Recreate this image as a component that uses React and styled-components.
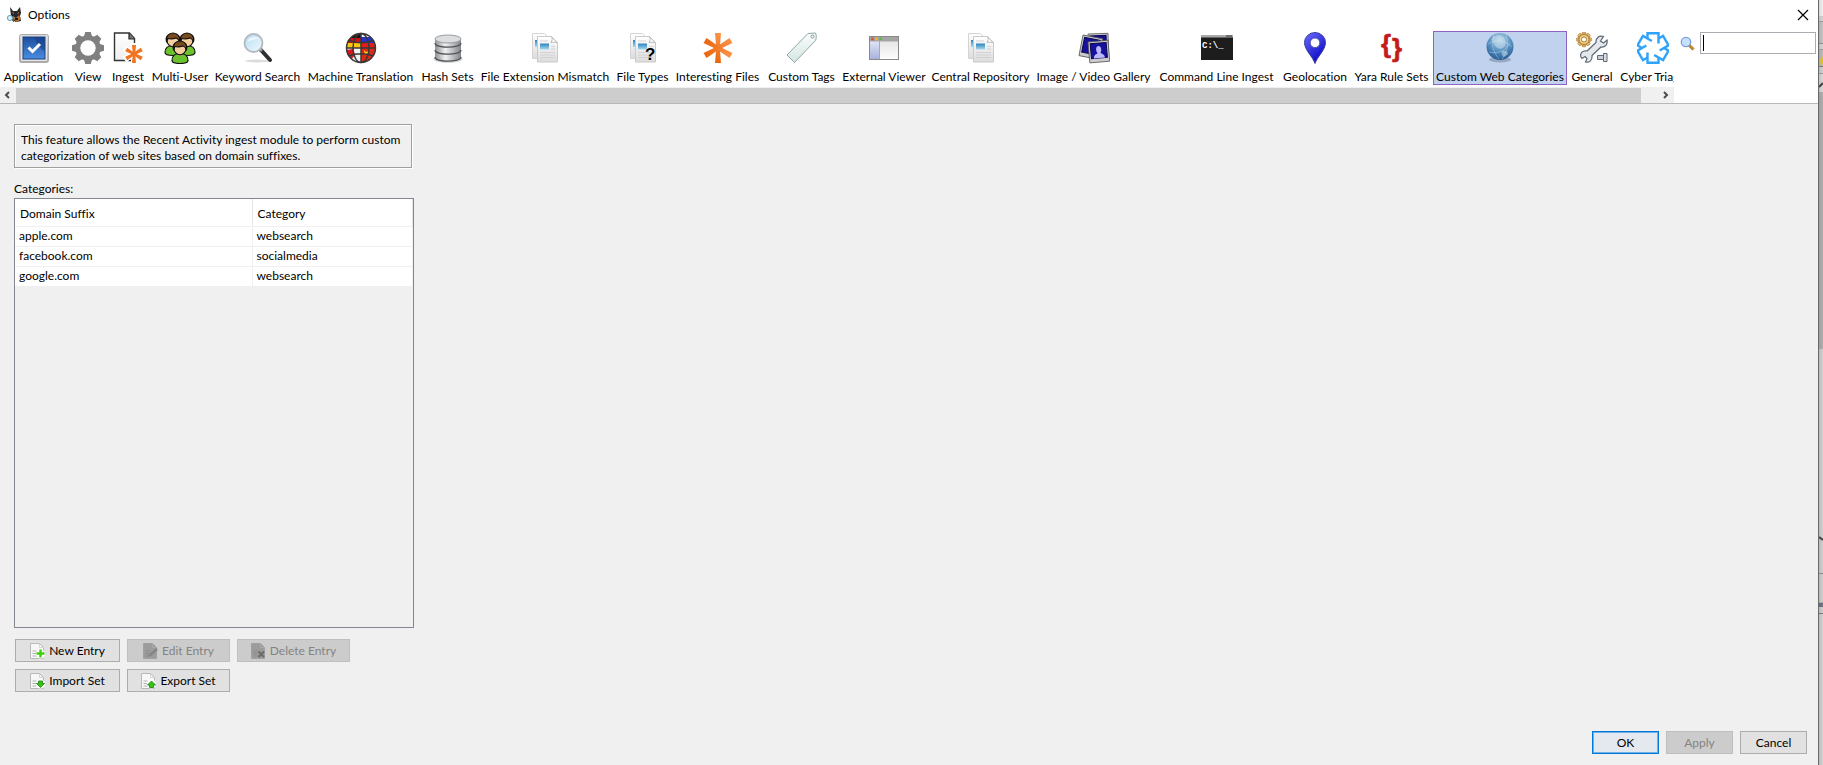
import React from 'react';
import styled, { createGlobalStyle, css } from 'styled-components';

const Global = createGlobalStyle`
  * { box-sizing: border-box; }
  body { margin: 0; }
  body, button, input, table {
    font: 12px/16px Lato, "Open Sans", sans-serif;
    font-variant-ligatures: none;
    color: #000;
  }
`;

const Desktop = styled.div`
  display: flex;
  min-height: 100vh;
  background: #cfcfcf;
`;

const Dialog = styled.main`
  flex: 1;
  min-width: 0;
  display: flex;
  flex-direction: column;
  background: #f0f0f0;
  border-right: 1px solid #6a6a6a;
`;

const TitleBar = styled.header`
  height: 31px;
  padding: 0 9px 2px 7px;
  display: flex;
  align-items: center;
  gap: 5px;
  background: #fff;
`;

const Title = styled.h1`
  flex: 1;
  margin: 0;
  font-size: 12px;
  font-weight: 400;
`;

const IconButton = styled.button`
  display: flex;
  align-items: center;
  justify-content: center;
  width: 12px;
  height: 15px;
  padding: 0;
  border: 0;
  background: transparent;
`;

const Toolbar = styled.div`
  display: flex;
  background: #fff;
  border-bottom: 1px solid #b8b8b8;
  height: 73px;
`;

const Scroller = styled.div`
  flex: 1;
  min-width: 0;
  display: flex;
  flex-direction: column;
  justify-content: space-between;
`;

const ToolList = styled.nav`
  display: flex;
  gap: 2px;
  overflow: hidden;
`;

const Tool = styled.button`
  flex: none;
  width: ${p => p.$width}px;
  height: 54px;
  padding: 0;
  display: flex;
  flex-direction: column;
  align-items: center;
  white-space: nowrap;
  border: 1px solid ${p => (p.$active ? '#8e63c4' : 'transparent')};
  background: ${p => (p.$active ? '#c1d2ee' : 'transparent')};
`;

const ToolLabel = styled.span`
  line-height: 16px;
  height: 20px;
  padding-top: 5px;
`;

const ScrollBar = styled.div`
  display: flex;
  align-items: center;
  height: 16px;
  padding: 0 2px 0 1px;
  background: #f0f0f0;
`;

const Thumb = styled.div`
  flex: 1;
  height: 15px;
  margin: 0 19px 0 3px;
  background: #cdcdcd;
`;

const SearchArea = styled.label`
  flex: none;
  width: 144px;
  display: flex;
  align-items: flex-start;
  gap: 5px;
  padding: 1px 2px 0 6px;

  svg { margin-top: 4px; }
`;

const SearchField = styled.span`
  flex: 1;
  min-width: 0;
  display: flex;
  align-items: center;
  height: 22px;
  padding: 0 2px;
  border: 1px solid #abadb3;
  background: #fff;
`;

const Caret = styled.span`
  width: 1px;
  height: 16px;
  background: #000;
`;

const SearchInput = styled.input`
  flex: 1;
  min-width: 0;
  padding: 0;
  border: 0;
  outline: 0;
  background: transparent;
`;

const Panel = styled.section`
  flex: 1;
  width: 414px;
  padding: 20px 0 0 14px;
  display: flex;
  flex-direction: column;
`;

const Description = styled.p`
  margin: 0 2px 0 0;
  height: 44px;
  padding: 7px 6px 0;
  border: 1px solid #a0a0a0;
  box-shadow: inset 1px 1px 0 #fff, 1px 1px 0 #fff;
  white-space: nowrap;
`;

const TableLabel = styled.h2`
  margin: 13px 0 1px;
  font-size: 12px;
  font-weight: 400;
`;

const TableBox = styled.div`
  flex: 1;
  border: 1px solid #828790;
`;

const Table = styled.table`
  width: 100%;
  table-layout: fixed;
  border-collapse: collapse;
  background: #fff;

  th, td {
    padding: 0 4px;
    text-align: left;
    font-weight: 400;
    border-right: 1px solid #f0f0f0;
    border-bottom: 1px solid #f0f0f0;
  }
  th { height: 27px; padding: 3px 5px 0; border-right: 1px solid #e5e5e5; }
  td { height: 20px; }
  th:first-child { width: 237px; }
`;

const Actions = styled.div`
  display: grid;
  grid-template-columns: 105px 103px 113px;
  gap: 7px;
  padding: 11px 0 0 1px;
`;

const Footer = styled.footer`
  display: flex;
  justify-content: flex-end;
  gap: 7px;
  padding: 39px 11px 11px;
`;

const disabledLook = css`
  color: #838383;
  background: #ccc;
  border-color: #bfbfbf;
`;

const defaultLook = css`
  background: #e4e9f0;
  border-color: #0078d7;
  box-shadow: inset 0 0 0 1px #6fb1e6;
`;

const PushButton = styled.button`
  height: 23px;
  min-width: 67px;
  padding: 1px 0 0;
  display: flex;
  align-items: center;
  justify-content: center;
  gap: 3px;
  border: 1px solid #adadad;
  background: #e1e1e1;
  ${p => p.$primary && defaultLook}
  ${p => p.disabled && disabledLook}
`;

const Backdrop = styled.div`
  width: 4px;
  display: flex;
  flex-direction: column;
`;

const Slice = styled.div`
  height: ${p => p.$height}px;
  flex: ${p => (p.$height ? 'none' : 1)};
  overflow: hidden;
  background: linear-gradient(90deg, rgba(0, 0, 0, .1), transparent) ${p => p.$color};
  border-bottom: 1px solid ${p => p.$line || 'transparent'};
`;

/* ---------- drawings ---------- */

const Svg = ({ size = 32, children }) => (
  <svg width={size} height={size} viewBox={`0 0 ${size} ${size}`} fill="none" aria-hidden="true">
    {children}
  </svg>
);

const Grad = ({ id, from, to, x2 = 0, y2 = 1 }) => (
  <linearGradient id={id} x1="0" y1="0" x2={x2} y2={y2}>
    <stop stopColor={from} /><stop offset="1" stopColor={to} />
  </linearGradient>
);

const ApplicationIcon = () => (
  <Svg>
    <defs><Grad id="apFrame" from="#dcdcdc" to="#a9a9a9" /><Grad id="apBlue" from="#1d4d9e" to="#4a8ee0" /></defs>
    <rect x="1.500" y="2.500" width="29" height="28" rx="2" fill="url(#apFrame)" stroke="#aaa" />
    <rect x="3" y="4" width="26" height="25" rx="1" fill="#e4e4e4" />
    <rect x="5" y="5" width="22" height="22" fill="url(#apBlue)" stroke="#1b3f7d" />
    <path d="M17 5.500h9.500V19c-4-2-8-6-9.500-13.500z" fill="#173f83" opacity=".6" />
    <path d="M10.500 15.500l4 4 7.500-7.500" stroke="#fff" strokeWidth="3" />
  </Svg>
);

const teeth = [0, 45, 90, 135, 180, 225, 270, 315];

const ViewIcon = () => (
  <Svg>
    <circle cx="16" cy="16" r="10.200" stroke="#808080" strokeWidth="5" />
    {teeth.map(a => <path key={a} d="M11.800 5L13.200 0h5.600l1.400 5z" fill="#808080" transform={`rotate(${a} 16 16)`} />)}
  </Svg>
);

const Asterisk = ({ x, y, r, w, fill }) => (
  <g transform={`translate(${x} ${y})`} fill={fill}>
    {[0, 60, 120].map(a => (
      <path key={a} transform={`rotate(${a})`} d={`M${-w} ${-r}h${2 * w}L${w * 0.6} 0L${w} ${r}h${-2 * w}L${-w * 0.6} 0z`} />
    ))}
  </g>
);

const IngestIcon = () => (
  <Svg>
    <defs><Grad id="inPage" from="#fff" to="#eee" /></defs>
    <path d="M2.500 1h15l5 5.500V28.500h-20z" fill="url(#inPage)" stroke="#333" strokeWidth="1.400" />
    <path d="M17 1v6h5.500" fill="#777" stroke="#222" strokeWidth="1.200" />
    <Asterisk x={22} y={22} r={11} w={3.5} fill="#fff" />
    <Asterisk x={22} y={22} r={9} w={2} fill="#f07522" />
  </Svg>
);

const Person = ({ x, y }) => (
  <g transform={`translate(${x} ${y})`} stroke="#111" strokeWidth="1.200">
    <path d="M-8 12c0-5 3-7 8-7s8 2 8 7c0 2-3 3-8 3s-8-1-8-3z" fill="#6cc22c" />
    <path d="M-3 5c1 3 5 3 6 0l-1-2h-4z" fill="#eec08d" stroke="none" />
    <ellipse cy="0" rx="6" ry="6.300" fill="#f5cfa0" />
    <path d="M-6.500 1C-8-4-4-7.500 0-7.500S8-4 6.500 1C5.500-1 5-2 3-2.500 0-1.500-3-1.500-5-2c-1 1-1 2-1.500 3z" fill="#7a4a1f" />
  </g>
);

const MultiUserIcon = () => (
  <Svg><Person x={9} y={8.5} /><Person x={23} y={8.5} /><Person x={16} y={16.5} /></Svg>
);

const KeywordIcon = () => (
  <Svg>
    <defs><Grad id="kwLens" from="#b4dcf2" to="#f2fbff" x2={1} /></defs>
    <ellipse cx="15" cy="29" rx="12" ry="1.500" fill="#ddd" />
    <path d="M19 18l9 10" stroke="#2e3033" strokeWidth="4" strokeLinecap="round" />
    <path d="M17 16l3 3" stroke="#999" strokeWidth="2.500" />
    <circle cx="11.500" cy="11" r="9" fill="url(#kwLens)" stroke="#b4b9bd" strokeWidth="1.800" />
    <path d="M5 10c2-5 8-6 12-3-5 0-8 1-12 3z" fill="#fff" opacity=".7" />
  </Svg>
);

const TranslationIcon = () => (
  <Svg>
    <clipPath id="mtClip"><circle cx="16" cy="16" r="14.500" /></clipPath>
    <g clipPath="url(#mtClip)">
      <path d="M0 0h16v6H0z" fill="#151515" /><path d="M0 6h16v5H0z" fill="#d40f14" />
      <path d="M0 11h16v5H0z" fill="#f8c70d" />
      <path d="M16 0h16v7H16z" fill="#f3f3f3" /><path d="M16 5h16v6H16z" fill="#2732c9" />
      <path d="M16 11h16v5H16z" fill="#e31b1b" />
      <path d="M0 16h32v16H0z" fill="#f2f2f2" /><path d="M0 18l8-1 2 6-5 6H0z" fill="#d81820" />
      <path d="M16 16h16v16H16z" fill="#dd2a16" /><path d="M19 18l2 2 3-1-1 3-3 1z" fill="#ffd91c" />
    </g>
    <g stroke="#383838" strokeWidth="1.500">
      <circle cx="16" cy="16" r="14.500" /><ellipse cx="16" cy="16" rx="8" ry="14.500" />
      <path d="M16 1.500v29M1.500 16h29M4 8.500c7 3 17 3 24 0M4 24c7-3 17-3 24 0" />
    </g>
  </Svg>
);

const HashIcon = () => (
  <Svg>
    <defs>
      <linearGradient id="hsBody"><stop stopColor="#8d8f92" /><stop offset=".4" stopColor="#f1f1f1" /><stop offset="1" stopColor="#808388" /></linearGradient>
    </defs>
    <ellipse cx="16" cy="27" rx="14.500" ry="4" fill="#d7d7d7" />
    {[20, 13, 6].map(y => (
      <g key={y}>
        <path d={`M3 ${y}v5c0 5.500 26 5.500 26 0v-5z`} fill="url(#hsBody)" />
        <path d={`M3 ${y + 5}c0 5.500 26 5.500 26 0`} stroke="#4d5358" strokeWidth="1.300" />
      </g>
    ))}
    <ellipse cx="16" cy="7" rx="13" ry="4" fill="#dcdddf" stroke="#999ca0" />
  </Svg>
);

const FilesIcon = ({ query }) => (
  <Svg>
    <defs><Grad id="flPage" from="#fff" to="#dcdcdc" /><Grad id="flPhoto" from="#2f82bd" to="#a7d9ee" /></defs>
    <path d="M3.500 1.500h12l4 4v21h-16z" fill="url(#flPage)" stroke="#d4d4d4" />
    <path d="M6 8h5v7H6z" fill="url(#flPhoto)" />
    <path d="M8.500 4.500h14l6 6.500v19h-20z" fill="url(#flPage)" stroke="#cacaca" />
    <path d="M22.500 4.500c1.500 2 .5 4-.5 6 2.500-.5 5-.5 6.500.5z" fill="#fff" stroke="#bbb" />
    <path d="M11 11.500h9v6h-9z" fill="url(#flPhoto)" />
    <path d="M11 9h8M22 14.500h4M22 17h4M11 20.500h15M11 23h15M11 25.500h15" stroke="#d2d2d2" />
    {query && <text x="18" y="28" fill="#000" fontFamily="Liberation Sans" fontSize="17" fontWeight="700">?</text>}
  </Svg>
);

const InterestingIcon = () => (
  <Svg>
    <defs><linearGradient id="itOrange" gradientUnits="userSpaceOnUse" x1="0" y1="-15" x2="0" y2="15"><stop stopColor="#fb9245" /><stop offset="1" stopColor="#e9660f" /></linearGradient></defs>
    <Asterisk x={16} y={16} r={15} w={3} fill="url(#itOrange)" />
  </Svg>
);

const TagIcon = () => (
  <Svg>
    <defs><Grad id="tgBody" from="#fafdfc" to="#d3e6e3" /></defs>
    <path d="M22 1.500L29.500 1c1 2.500 1 5 0 7.500L8.500 30.500 1 23z" fill="url(#tgBody)" stroke="#8fa6a2" />
    <circle cx="26.500" cy="4.500" r="1.500" fill="#fff" stroke="#7f9591" />
  </Svg>
);

const ViewerIcon = () => (
  <Svg>
    <defs><Grad id="vwSide" from="#dfe4f6" to="#a9b2dc" /><Grad id="vwMain" from="#e6e6e6" to="#fdfdfd" /></defs>
    <rect x="1.500" y="4.500" width="29" height="23" fill="#aaa" stroke="#898989" />
    <path d="M2 5h28v4H2z" fill="#a5a5a5" />
    <path d="M2 9.500h9V27H2z" fill="url(#vwSide)" /><path d="M12 9.500h18V27H12z" fill="url(#vwMain)" />
    <circle cx="4.500" cy="7" r="1.400" fill="#e24a4a" /><circle cx="8.500" cy="7" r="1.400" fill="#e8ba2c" /><circle cx="12.500" cy="7" r="1.400" fill="#5db63d" />
  </Svg>
);

const Photo = ({ turn, x, y, person }) => (
  <g transform={`translate(${x} ${y}) rotate(${turn})`}>
    <rect width="20" height="21" fill="#ccc" stroke="#555" strokeWidth=".8" />
    <rect x="2" y="2" width="16" height="15" fill="#17109a" stroke="#0b0750" />
    {person && <path d="M4.500 17c0-4 3-4 4-5-2-3-1-7 1.500-7s3.500 4 1.500 7c1 1 4 1 4 5z" fill="#b9b7ff" />}
  </g>
);

const GalleryIcon = () => (
  <Svg><Photo x={10} y={2} turn={-2} /><Photo x={5} y={3} turn={11} /><Photo x={10} y={10} turn={-5} person /></Svg>
);

const CommandIcon = () => (
  <Svg>
    <rect y="3" width="32" height="25" fill="#1d1d1d" />
    <path d="M0 3h32v2.500H0z" fill="#a9a9a9" /><path d="M25 4h6" stroke="#333" />
    <text x="1" y="16" fill="#fff" fontFamily="Liberation Mono" fontSize="9" fontWeight="700">C:\_</text>
  </Svg>
);

const PinIcon = () => (
  <Svg>
    <defs><Grad id="pnBlue" from="#6d6dff" to="#0808c4" x2={0.6} /></defs>
    <path d="M16 31.500C14 25 5.500 18 5.500 10.500a10.500 10 0 0 1 21 0C26.500 18 18 25 16 31.500z" fill="url(#pnBlue)" stroke="#3c3ca0" />
    <circle cx="16" cy="10.800" r="4.800" fill="#fff" stroke="#5a5aa8" />
  </Svg>
);

const YaraIcon = () => (
  <Svg>
    <g fill="#c41a1a" fontFamily="Liberation Sans" fontSize="26" fontWeight="700" stroke="#c41a1a" strokeWidth=".6">
      <text x="5" y="21">{'{'}</text><text x="16" y="25">{'}'}</text>
    </g>
  </Svg>
);

const GlobeIcon = () => (
  <Svg>
    <defs><radialGradient id="gbBlue" cx=".5" cy=".25" r=".8"><stop stopColor="#b8d6ea" /><stop offset=".5" stopColor="#5b93c2" /><stop offset="1" stopColor="#1d5490" /></radialGradient></defs>
    <ellipse cx="16" cy="27.500" rx="11" ry="3" fill="#7d8aa3" opacity=".6" />
    <circle cx="16" cy="14.500" r="13.500" fill="url(#gbBlue)" />
    <path d="M9 5c4-3 9-2 11 1s3 8-1 10-8-1-9-4-4-4-1-7zM18 19c3-1 6 0 6 3l-4 3c-2-1-3-4-2-6z" fill="#cfe2ee" opacity=".5" />
    <path d="M4 12c7-5 17-4 24 3M5 20c8 2 16 0 21-9M10 3c-3 9-1 17 5 24M22 3c3 8 1 17-4 24" stroke="#d9ecf7" strokeWidth=".6" opacity=".6" />
  </Svg>
);

const GeneralIcon = () => (
  <Svg>
    {teeth.map(a => <path key={a} d="M6 2.200l.6-2h2.800l.6 2z" fill="#e9bd6c" stroke="#a87a28" strokeWidth=".7" transform={`rotate(${a} 8 7.500)`} />)}
    <circle cx="8" cy="7.500" r="5" fill="#f5d493" stroke="#a87a28" />
    <circle cx="8" cy="7.500" r="2.600" fill="#fff" stroke="#a87a28" />
    <path d="M27.500 4.500c-4-1.500-8 1.500-7.500 6L11 19c-4-1-7.500 2-6 6l1 1.500 3-2 2 2-1.500 3.500c4 1 7-2 6.500-6.500l9-8.500c4 .5 7-2.500 6-7l-3.500 3-3-2z" fill="#e4e8ec" stroke="#5c6875" strokeWidth="1.200" />
    <path d="M21.500 23.500h6v4h-6z" fill="#c9ced4" stroke="#5c6875" /><path d="M27.500 21.500h3.500v8h-3.500z" fill="#d9dde2" stroke="#5c6875" />
  </Svg>
);

const CyberIcon = () => (
  <Svg>
    <g transform="translate(16 16)" stroke="#2fa3fb" strokeWidth="2.400">
      {[0, 60, 120, 180, 240, 300].map(a => <path key={a} d="M-5.500-9.500V-14.800H5.500V-4.500" transform={`rotate(${a})`} />)}
    </g>
  </Svg>
);

const DogIcon = () => (
  <Svg size={16}>
    <path d="M3 0l3 4h4l3-4 1 6-1 3 1 5-5 1-6-3 1-3z" fill="#27272b" />
    <path d="M6 9l3 2 3-3 2 4-4 3-4-3z" fill="#b5712b" /><path d="M5.500 5.500l1.500 1M12 5.500l-1.500 1" stroke="#d08a3e" />
    <path d="M8 11h3v2H8z" fill="#1b1b1d" />
    <circle cx="3" cy="11" r="2.600" fill="#d4eef7" stroke="#5aa7bd" /><path d="M5 13l2 2" stroke="#666" />
  </Svg>
);

const LookupIcon = () => (
  <Svg size={15}>
    <path d="M9 9l4.500 4.500" stroke="#b5731a" strokeWidth="3" /><path d="M10 9.500l3.500 3.500" stroke="#e9a83f" />
    <circle cx="6" cy="6" r="4.700" fill="#c4e2fb" stroke="#7d9dda" strokeWidth="1.300" />
  </Svg>
);

const CloseIcon = () => <Svg size={12}><path d="M1 1l10 10M11 1L1 11" stroke="#000" strokeWidth="1.200" /></Svg>;

const Chevron = ({ right }) => (
  <svg width="8" height="8" viewBox="0 0 8 8" fill="none" aria-hidden="true">
    <path d={right ? 'M2 1l3 3-3 3' : 'M6 1L3 4l3 3'} stroke="#4d4d4d" strokeWidth="2" />
  </svg>
);

const marks = {
  add: <path d="M10.500 6.500v8M6.500 10.500h8" stroke="#3fce0c" strokeWidth="2.400" />,
  edit: <path d="M6 13l8-7" stroke="#858585" strokeWidth="2.500" />,
  remove: <path d="M7.500 8.500l5.500 5.500M13 8.500L7.500 14" stroke="#6c6c6c" strokeWidth="2.200" />,
  down: <path d="M8.500 8h4v2.500h2l-4 4-4-4h2z" fill="#36c414" stroke="#198208" strokeWidth=".8" />,
  up: <path d="M8.500 14.500h4V12h2l-4-4-4 4h2z" fill="#36c414" stroke="#198208" strokeWidth=".8" />,
};

const EntryIcon = ({ mark, dim }) => (
  <Svg size={16}>
    <path d="M.5.500h9l4 4v11H.5z" fill={dim ? '#9c9c9c' : '#f7f7f7'} stroke={dim ? '#a0a0a0' : '#b9b9b9'} />
    <path d="M9.500.500v4h4" stroke={dim ? '#ababab' : '#d5d5d5'} />
    <path d="M2.500 8h4M2.500 10.500h3.500M2.500 13h4" stroke={dim ? '#8b8b8b' : '#aeb2b5'} />
    {!dim && <circle cx="10.500" cy="11" r="4.500" fill="#fff" />}
    {marks[mark]}
  </Svg>
);

/* ---------- data ---------- */

const tools = [
  { label: 'Application', width: 67, icon: <ApplicationIcon /> },
  { label: 'View', width: 38, icon: <ViewIcon /> },
  { label: 'Ingest', width: 38, icon: <IngestIcon /> },
  { label: 'Multi-User', width: 62, icon: <MultiUserIcon /> },
  { label: 'Keyword Search', width: 89, icon: <KeywordIcon /> },
  { label: 'Machine Translation', width: 113, icon: <TranslationIcon /> },
  { label: 'Hash Sets', width: 57, icon: <HashIcon /> },
  { label: 'File Extension Mismatch', width: 134, icon: <FilesIcon /> },
  { label: 'File Types', width: 57, icon: <FilesIcon query /> },
  { label: 'Interesting Files', width: 89, icon: <InterestingIcon /> },
  { label: 'Custom Tags', width: 75, icon: <TagIcon /> },
  { label: 'External Viewer', width: 86, icon: <ViewerIcon /> },
  { label: 'Central Repository', width: 103, icon: <FilesIcon /> },
  { label: 'Image / Video Gallery', width: 119, icon: <GalleryIcon /> },
  { label: 'Command Line Ingest', width: 123, icon: <CommandIcon /> },
  { label: 'Geolocation', width: 70, icon: <PinIcon /> },
  { label: 'Yara Rule Sets', width: 79, icon: <YaraIcon /> },
  { label: 'Custom Web Categories', width: 134, icon: <GlobeIcon />, active: true },
  { label: 'General', width: 46, icon: <GeneralIcon /> },
  { label: 'Cyber Triage', width: 72, icon: <CyberIcon /> },
];

const entries = [
  ['apple.com', 'websearch'],
  ['facebook.com', 'socialmedia'],
  ['google.com', 'websearch'],
];

export default function App() {
  return (
    <Desktop>
      <Global />
      <Dialog>
        <TitleBar>
          <DogIcon />
          <Title>Options</Title>
          <IconButton aria-label="Close"><CloseIcon /></IconButton>
        </TitleBar>
        <Toolbar>
          <Scroller>
            <ToolList>
              {tools.map(t => (
                <Tool key={t.label} $width={t.width} $active={t.active}>
                  {t.icon}
                  <ToolLabel>{t.label}</ToolLabel>
                </Tool>
              ))}
            </ToolList>
            <ScrollBar>
              <IconButton aria-label="Scroll left"><Chevron /></IconButton>
              <Thumb />
              <IconButton aria-label="Scroll right"><Chevron right /></IconButton>
            </ScrollBar>
          </Scroller>
          <SearchArea>
            <LookupIcon />
            <SearchField>
              <Caret />
              <SearchInput type="text" aria-label="Filter options" />
            </SearchField>
          </SearchArea>
        </Toolbar>
        <Panel>
          <Description>
            This feature allows the Recent Activity ingest module to perform custom<br />
            categorization of web sites based on domain suffixes.
          </Description>
          <TableLabel id="categories">Categories:</TableLabel>
          <TableBox>
            <Table aria-labelledby="categories">
              <thead><tr><th>Domain Suffix</th><th>Category</th></tr></thead>
              <tbody>
                {entries.map(([domain, category]) => (
                  <tr key={domain}><td>{domain}</td><td>{category}</td></tr>
                ))}
              </tbody>
            </Table>
          </TableBox>
          <Actions>
            <PushButton><EntryIcon mark="add" />New Entry</PushButton>
            <PushButton disabled><EntryIcon mark="edit" dim />Edit Entry</PushButton>
            <PushButton disabled><EntryIcon mark="remove" dim />Delete Entry</PushButton>
            <PushButton><EntryIcon mark="down" />Import Set</PushButton>
            <PushButton><EntryIcon mark="up" />Export Set</PushButton>
          </Actions>
        </Panel>
        <Footer>
          <PushButton $primary>OK</PushButton>
          <PushButton disabled>Apply</PushButton>
          <PushButton>Cancel</PushButton>
        </Footer>
      </Dialog>
      <Backdrop>
        <Slice $height={17} $color="#f0f0f0" $line="#c8c8c8" />
        <Slice $height={5} $color="#d5d5d5" $line="#999" />
        <Slice $height={22} $color="#c4c4c4" $line="#8d8d8d" />
        <Slice $height={6} $color="#d5d5d5" $line="#999" />
        <Slice $height={17} $color="#bdbdbd" $line="#777">
          <svg width="4" height="16" viewBox="0 0 4 16" aria-hidden="true"><path d="M4 5L3 9l-3 1 2 2-1 3 3-1z" fill="#e3c416" /></svg>
        </Slice>
        <Slice $height={7} $color="#d0d0d0" $line="#999" />
        <Slice $height={18} $color="#d8d8d8">
          <svg width="4" height="16" viewBox="0 0 4 16" fill="none" aria-hidden="true"><path d="M0 13l4-4" stroke="#444" strokeWidth="2" /></svg>
        </Slice>
        <Slice $height={257} $color="#b0b0b0" />
        <Slice $height={182} $color="#d0d0d0" />
        <Slice $height={43} $color="#d0d0d0" $line="#888">
          <svg width="4" height="8" viewBox="0 0 4 8" fill="none" aria-hidden="true"><path d="M0 2l4 3" stroke="#444" strokeWidth="2" /></svg>
        </Slice>
        <Slice $height={29} $color="#cfcfcf" $line="#aaa" />
        <Slice $height={4} $color="#6f7788" />
        <Slice $height={7} $color="#cfcfcf" $line="#777" />
        <Slice $color="#d2d2d2" />
      </Backdrop>
    </Desktop>
  );
}
